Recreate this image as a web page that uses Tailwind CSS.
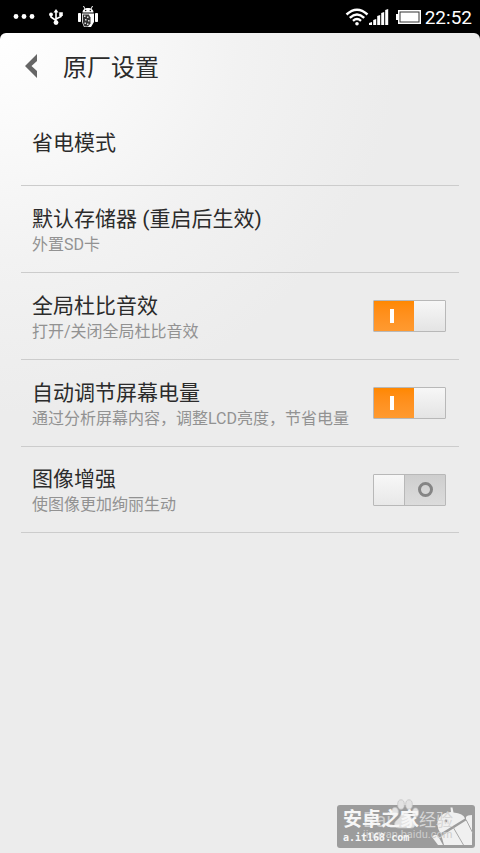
<!DOCTYPE html>
<html lang="zh-CN">
<head>
<meta charset="utf-8">
<meta name="viewport" content="width=device-width, initial-scale=1">
<title>原厂设置</title>
<script src="https://cdn.jsdelivr.net/npm/@tailwindcss/browser@4"></script>
</head>
<body class="flex min-h-screen flex-col bg-black font-['Roboto','Noto_Sans_CJK_SC',sans-serif] text-[#2b2b2b]">
  <header class="flex h-[33px] shrink-0 items-center justify-between pl-[13px] pr-2 text-white">
    <div class="flex items-center">
      <svg class="h-5 w-[22px]" viewBox="0 0 22 20" fill="#fff" aria-label="更多通知"><circle cx="3" cy="9.500" r="2.400"/><circle cx="11" cy="9.500" r="2.400"/><circle cx="19" cy="9.500" r="2.400"/></svg>
      <svg class="ml-3.5 h-4 w-3.5" viewBox="0 0 14 16" fill="none" stroke="#fff" stroke-width="1.600" aria-label="USB"><path d="M7 2v12M2 5.500v2.500L7 11.500M12 5v2.500L7 10"/><path d="M7 0l2.500 3.500h-5z" fill="#fff" stroke="none"/><circle cx="2" cy="5.500" r="1.900" fill="#fff" stroke="none"/><path d="M10.200 3.300h3.600v3.600h-3.600z" fill="#fff" stroke="none"/><circle cx="7" cy="13.600" r="2.400" fill="#fff" stroke="none"/></svg>
      <svg class="ml-3.5 h-6 w-[22px]" viewBox="0 0 22 24" aria-label="调试"><path d="M6.500 1l1.500 3M15.500 1L14 4" stroke="#fff" stroke-width="1"/><path d="M5.500 7.500c0-3 2.500-4.500 5.500-4.500s5.500 1.500 5.500 4.500z" fill="#fff"/><circle cx="8.700" cy="5.500" r=".7"/><circle cx="13.300" cy="5.500" r=".7"/><rect x="1" y="8" width="3" height="9" rx=".8" fill="#fff"/><rect x="18" y="8" width="3" height="9" rx=".8" fill="#fff"/><path d="M5 8.500h12v8.500l-3 5H7l-2-5z" fill="#fff"/><path d="M5.800 9.500h6l1.700 3v6L11 21.500H7.500l-1.700-4z" fill="#333"/><path d="M7 10.500h1.500V12H7zM10 11.500h1.500V13H10zM8 14h1.500v1.500H8zM11 15h1.500v1.500H11zM7.500 17.500H9V19H7.500zM10 18.500h1.500V20H10z" fill="#ddd"/></svg>
    </div>
    <div class="flex items-center">
      <svg class="h-[18px] w-6" viewBox="0 0 24 18" fill="none" stroke="#fff" stroke-width="2.400" aria-label="无线网络"><path d="M1.500 6.500Q12-3 22.500 6.500M4.800 9.800Q12 3.300 19.200 9.800M8 12.900Q12 9.300 16 12.900"/><circle cx="12" cy="15.800" r="1.800" fill="#fff" stroke="none"/></svg>
      <svg class="h-[18px] w-5" viewBox="0 0 20 18" fill="#fff" aria-label="信号"><path d="M0 15l3-1v3H0zM4.200 12l3-1v6h-3zM8.200 8l3-1v10h-3zM12.200 5l3-1v13h-3zM16.200 2l3-1v16h-3z"/></svg>
      <svg class="ml-[7px] h-4 w-[25px]" viewBox="0 0 25 16" aria-label="电池"><path d="M0 5h2V1h23v14H2v-4H0z" fill="#fff"/><rect x="4" y="3" width="19" height="10" fill="none" stroke="#333" stroke-width="1"/></svg>
      <time class="ml-1 pt-0.5 text-[19px] leading-6">22:52</time>
    </div>
  </header>

  <main class="relative flex-1 rounded-t-md bg-[#ececec] bg-[radial-gradient(ellipse_400px_380px_at_0_0,#ffffff_0%,#fafafa_25%,#f2f2f2_60%,#ececec_100%)]">
    <div class="flex h-[66px] items-center pl-6">
      <button type="button" aria-label="返回" class="h-6 w-[13px]"><svg class="h-6 w-[13px]" viewBox="0 0 13 24" fill="#666"><path d="M13 0v7L7.500 12l5.500 5v7L1 12z"/></svg></button>
      <h1 class="ml-[26px] pt-[3px] text-2xl">原厂设置</h1>
    </div>

    <ul class="mx-[21px]">
      <li class="flex h-[87px] items-center border-b border-[#cccccc] px-[11px]">
        <a href="#" class="pt-0.5 text-[21px] leading-7">省电模式</a>
      </li>
      <li class="flex h-[87px] items-center border-b border-[#cccccc] px-[11px]">
        <a href="#" class="pt-[3px]"><span class="block text-[21px] leading-7">默认存储器 (重启后生效)</span><span class="block text-base text-[#929292]">外置SD卡</span></a>
      </li>
      <li class="flex h-[87px] items-center justify-between border-b border-[#cccccc] pl-[11px] pr-[13px]">
        <label for="dolby" class="pt-[3px]"><span class="block text-[21px] leading-7">全局杜比音效</span><span class="block text-base text-[#929292]">打开/关闭全局杜比音效</span></label>
        <span class="relative flex h-8 w-[73px] shrink-0 rounded-[1px] border border-[#b8b8b8]">
          <input id="dolby" type="checkbox" role="switch" checked class="absolute inset-0 z-10 h-full w-full cursor-pointer opacity-0">
          <span class="flex w-10 items-center justify-center bg-linear-to-b from-[#ff8800] to-[#ff9a30] pr-1"><span class="h-3.5 w-1 bg-white"></span></span>
          <span class="flex-1 bg-linear-to-b from-[#f7f7f7] to-[#e4e4e4]"></span>
        </span>
      </li>
      <li class="flex h-[87px] items-center justify-between border-b border-[#cccccc] pl-[11px] pr-[13px]">
        <label for="backlight" class="pt-[3px]"><span class="block text-[21px] leading-7">自动调节屏幕电量</span><span class="block text-base text-[#929292]">通过分析屏幕内容，调整LCD亮度，节省电量</span></label>
        <span class="relative flex h-8 w-[73px] shrink-0 rounded-[1px] border border-[#b8b8b8]">
          <input id="backlight" type="checkbox" role="switch" checked class="absolute inset-0 z-10 h-full w-full cursor-pointer opacity-0">
          <span class="flex w-10 items-center justify-center bg-linear-to-b from-[#ff8800] to-[#ff9a30] pr-1"><span class="h-3.5 w-1 bg-white"></span></span>
          <span class="flex-1 bg-linear-to-b from-[#f7f7f7] to-[#e4e4e4]"></span>
        </span>
      </li>
      <li class="flex h-[86px] items-center justify-between border-b border-[#cccccc] pl-[11px] pr-[13px]">
        <label for="enhance" class="pt-[3px]"><span class="block text-[21px] leading-7">图像增强</span><span class="block text-base text-[#929292]">使图像更加绚丽生动</span></label>
        <span class="relative flex h-8 w-[73px] shrink-0 rounded-[1px] border border-[#b8b8b8]">
          <input id="enhance" type="checkbox" role="switch" class="absolute inset-0 z-10 h-full w-full cursor-pointer opacity-0">
          <span class="flex-1 bg-linear-to-b from-[#f7f7f7] to-[#e8e8e8]"></span>
          <span class="flex w-[41px] items-center justify-center border-l border-[#b8b8b8] bg-linear-to-b from-[#cecece] to-[#dcdcdc]"><span class="h-[15px] w-[15px] rounded-full border-3 border-[#858585]"></span></span>
        </span>
      </li>
    </ul>

    <div class="absolute bottom-[5px] right-[5px] h-[43px] w-[138px] rounded-[3px] bg-[#9c9c9c] text-[#f6f6f6]">
      <svg class="absolute right-0 top-0 h-[43px] w-[44px]" viewBox="0 0 44 43" fill="#f0f0f0" aria-hidden="true"><path d="M19.500 2.500h2l1 5q10 1 11.500 6L9.500 28.500Q4 20 8 13q4-6 12-6z"/><path d="M10.500 31L35 15.500V12q1-2 6-2v30H13z"/><path d="M1 32q3-4 6-1l5 9H7z"/><path d="M22 22l10.500 18M35 14.500l7 14" fill="none" stroke="#a8a8a8" stroke-width="1"/><circle cx="15" cy="16" r="1.400" fill="#9c9c9c"/></svg>
      <div class="absolute left-[26px] top-[3px] text-xl leading-6 text-[#cccccc]">Bai</div>
      <svg class="absolute -top-1.5 left-[54px] h-8 w-7" viewBox="0 0 28 32" fill="#e2e2e2" stroke="#c4c4c4" stroke-width=".8" aria-hidden="true"><ellipse cx="10" cy="5.500" rx="3.300" ry="4.700"/><ellipse cx="18" cy="5.500" rx="3.300" ry="4.700"/><ellipse cx="4" cy="13" rx="3.300" ry="4.500"/><ellipse cx="24.500" cy="13.500" rx="3" ry="4.500"/><path d="M14 13c4 0 5 5 8 8s3 8-2 8H8c-5 0-6-5-2-8s4-8 8-8z"/></svg>
      <div class="absolute left-[82px] top-[3px] text-[17px] leading-6 text-[#d6d6d6]">经验</div>
      <div class="absolute left-[26px] top-[22px] text-[11px] leading-4 text-[#cccccc]">jingyan.baidu.com</div>
      <div class="absolute left-1.5 top-[3px] text-[19px] font-bold leading-6">安卓之家</div>
      <div class="absolute left-1.5 top-[25px] font-['DejaVu_Sans_Mono',monospace] text-[10px] font-bold leading-4">a.it168.com</div>
    </div>
  </main>
</body>
</html>
